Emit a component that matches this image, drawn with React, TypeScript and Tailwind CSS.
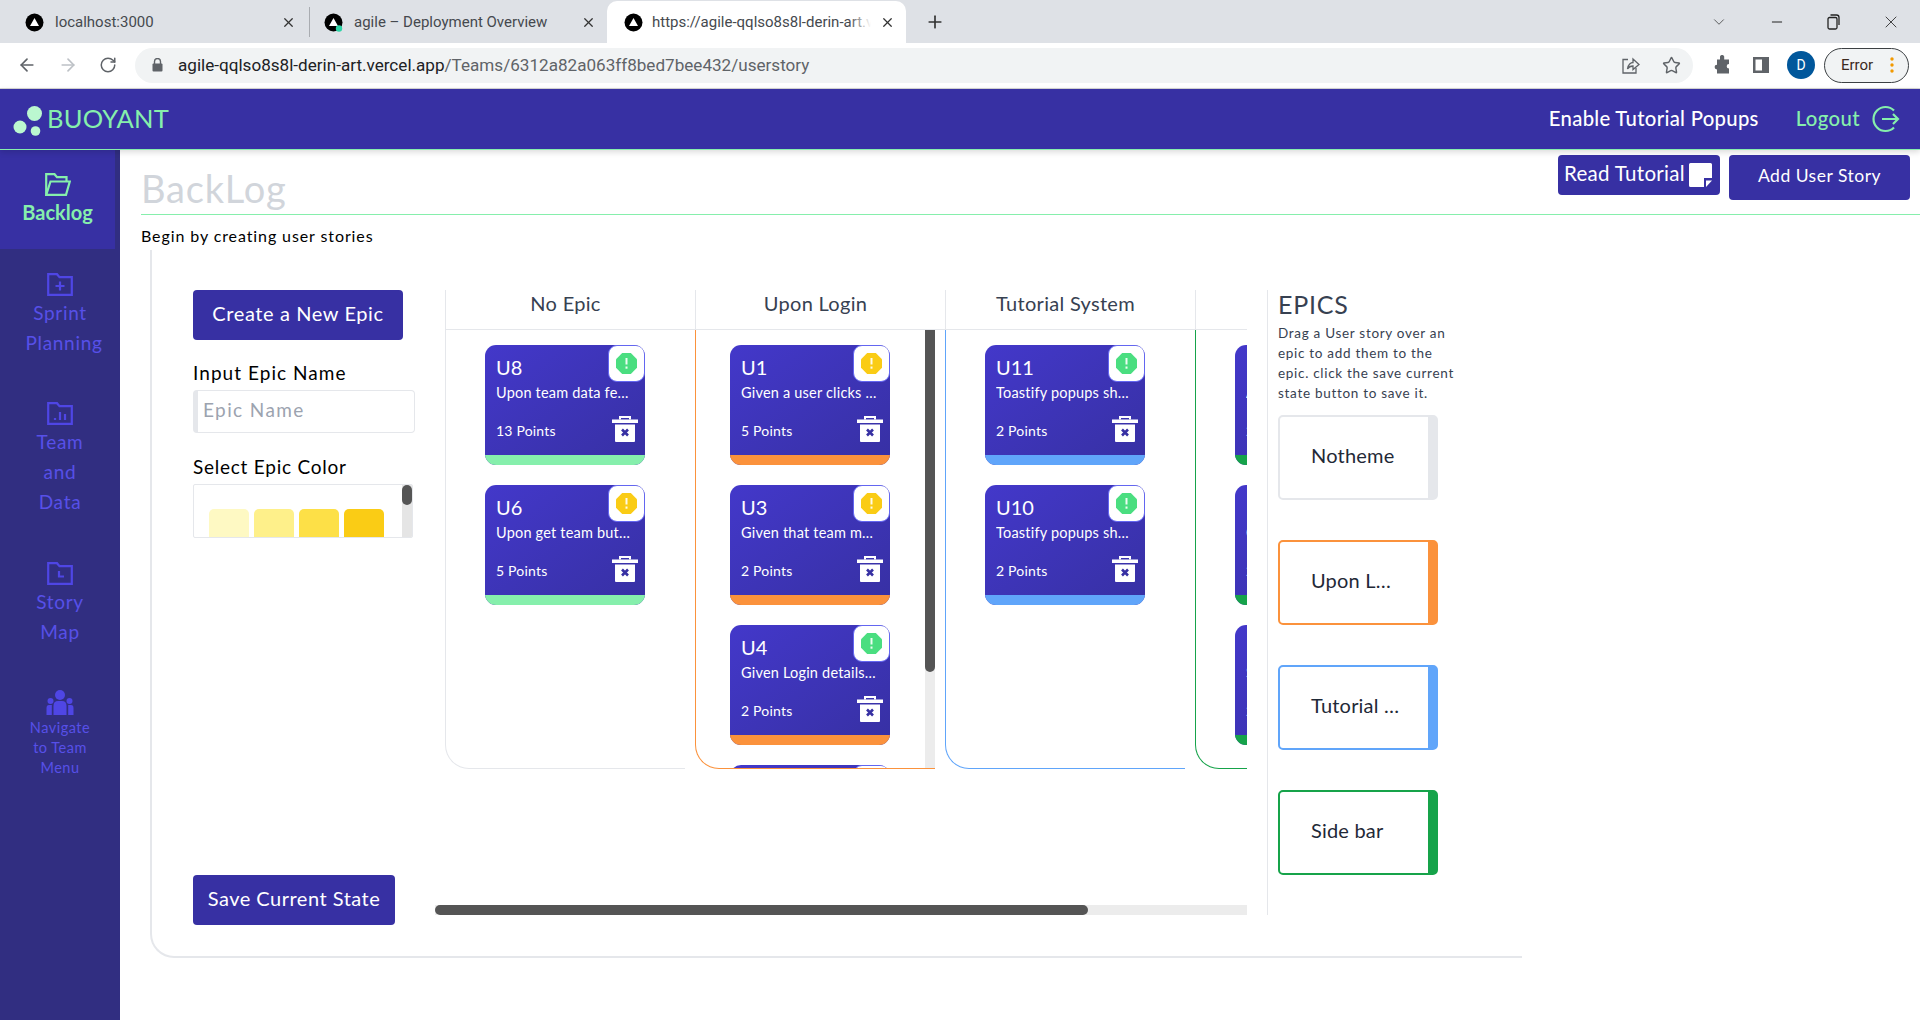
import React from "react";
import { ArrowLeft, ArrowRight, RotateCw, Star, Plus, X, ChevronDown, Minus } from "lucide-react";

function VercelIcon({ dot }: { dot?: boolean }) {
  return (
    <svg width="19" height="19" viewBox="0 0 19 19" className="flex-none">
      <circle cx="9.5" cy="9.5" r="9" fill="#000" />
      <path d="M9.5 5 L14 13 H5 Z" fill="#fff" />
      {dot && <circle cx="15" cy="15.5" r="3.2" fill="#2dd4a7" />}
    </svg>
  );
}

function Tab({ title, dot, active, tw, iconGap }: { title: string; dot?: boolean; active?: boolean; tw: string; iconGap: string }) {
  return (
    <div className={`relative flex items-center h-full flex-none ${tw} ${active ? "bg-white rounded-t-[10px]" : ""}`}>
      <VercelIcon dot={dot} />
      <span className={`relative ${iconGap} text-[15px] text-[#45494e] whitespace-nowrap overflow-hidden flex-1`}>
        {title}
        {active && <span className="absolute top-0 right-0 w-[22px] h-full bg-gradient-to-r from-transparent to-white" />}
      </span>
      <X size={15} strokeWidth={2} className="flex-none text-[#333]" />
    </div>
  );
}

function BrowserChrome() {
  return (
    <div className="flex-none font-[family-name:Roboto,sans-serif]">
      <div className="h-[43px] bg-[#dee1e6] flex items-end">
        <div className="h-[42px] flex items-center w-full">
          <Tab title="localhost:3000" tw="w-[310px] pl-[25px] pr-[13px] border-r border-[#a9acb1] !h-[30px]" iconGap="ml-[11px]" />
          <Tab title="agile – Deployment Overview" dot tw="w-[297px] pl-[14px] pr-[11px]" iconGap="ml-[11px]" />
          <Tab
            title="https://agile-qqlso8s8l-derin-art.vercel.app"
            active
            tw="w-[299px] pl-[17px] pr-[11px]"
            iconGap="ml-[9px] mr-[9px]"
          />
          <Plus size={20} strokeWidth={2} className="ml-[19px] text-[#333]" />
          <div className="flex-1" />
          <ChevronDown size={18} strokeWidth={1} className="text-[#333] mr-[41px]" />
          <Minus size={16} strokeWidth={1.5} className="text-[#222] mr-[41px]" />
          <svg width="14" height="16" viewBox="0 0 14 16" fill="none" stroke="#222" strokeWidth="1.3" className="mr-[41px]">
            <rect x="2" y="3.5" width="9" height="11.5" rx="1.5" />
            <path d="M4.5 1 H10.5 Q13 1 13 3.5 V11" />
          </svg>
          <X size={20} strokeWidth={1} className="text-[#222] mr-[19px]" />
        </div>
      </div>
      <div className="h-[46px] bg-white border-b border-[#d6d6d6] flex items-center pb-[1px]">
        <ArrowLeft size={20} strokeWidth={2} className="ml-[17px] text-[#5f6368]" />
        <ArrowRight size={20} strokeWidth={2} className="ml-[21px] text-[#bdc1c6]" />
        <RotateCw size={18} strokeWidth={2} className="ml-[21px] text-[#5f6368]" />
        <div className="ml-[18px] w-[1558px] h-[35px] rounded-full bg-[#f1f3f4] flex items-center pl-[17px]">
          <svg width="11" height="14" viewBox="0 0 11 14" className="flex-none">
            <rect x="0.5" y="5.5" width="10" height="8" rx="1" fill="#5f6368" />
            <path d="M2.5 6 V3.5 a3 3 0 0 1 6 0 V6" fill="none" stroke="#5f6368" strokeWidth="1.4" />
          </svg>
          <div className="ml-[15px] mt-[2px] text-[17.1px] whitespace-nowrap">
            <span className="text-[#202124]">agile-qqlso8s8l-derin-art.vercel.app</span>
            <span className="text-[#5f6368]">/Teams/6312a82a063ff8bed7bee432/userstory</span>
          </div>
          <div className="flex-1" />
          <svg width="19" height="19" viewBox="0 0 19 19" fill="none" stroke="#5f6368" strokeWidth="1.3" className="mr-[22px]">
            <path d="M7 3.5 H2 V17 H15 V12" />
            <path d="M6.5 13 C7 8.5 10 6.5 12 6.5 V3 L18 8.5 L12 13.5 V10 C10 10 8 10.5 6.5 13 Z" />
          </svg>
          <Star size={19} strokeWidth={1.8} className="text-[#5f6368] mr-[12px]" />
        </div>
        <svg width="20" height="20" viewBox="0 0 20 20" fill="#5f6368" className="ml-[19px] flex-none">
          <path d="M8 1.5 a2.2 2.2 0 0 1 4.2 0 V4.5 H17 V9 a2.3 2.3 0 0 0 0 4.6 V18.5 H5 V14.5 a2.4 2.4 0 0 1 0 -4.8 V4.5 H8 Z" />
        </svg>
        <svg width="18" height="18" viewBox="0 0 18 18" className="ml-[20px] flex-none">
          <rect x="1" y="1" width="16" height="16" fill="#5f6368" />
          <rect x="3.5" y="3.5" width="6.5" height="11" fill="#fff" />
        </svg>
        <div className="ml-[17px] w-[28px] h-[28px] rounded-full bg-[#01579b] text-white text-[14px] flex items-center justify-center flex-none">D</div>
        <div className="ml-[9px] w-[85px] h-[35px] rounded-full border border-[#3c4043] bg-[#f1f3f4] flex items-center pl-[16px] flex-none">
          <span className="text-[15px] text-[#3c2a1e]">Error</span>
          <svg width="4" height="16" viewBox="0 0 4 16" fill="#f29900" className="ml-[17px]">
            <circle cx="2" cy="2" r="1.7" />
            <circle cx="2" cy="8" r="1.7" />
            <circle cx="2" cy="14" r="1.7" />
          </svg>
        </div>
      </div>
    </div>
  );
}

function Navbar() {
  return (
    <div className="flex-none h-[61px] bg-[#3730a3] border-b border-[#86efac] flex items-center shadow-[0_2px_6px_rgba(0,0,0,0.15)] relative z-10">
      <svg width="32" height="32" viewBox="0 0 32 32" className="ml-[12px] flex-none mt-[3px]">
        <circle cx="22.5" cy="8.5" r="7.5" fill="#bbf7d0" />
        <circle cx="8" cy="22" r="6.5" fill="#bbf7d0" />
        <circle cx="23.5" cy="26" r="4.8" fill="#bbf7d0" />
      </svg>
      <span className="ml-[3px] pb-[2px] text-[25.5px] text-[#86efac] tracking-[0.2px]">BUOYANT</span>
      <div className="flex-1" />
      <span className="pb-[2px] text-[20.3px] font-medium text-white tracking-[0.3px]">Enable Tutorial Popups</span>
      <span className="ml-[37px] pb-[2px] text-[20.3px] font-medium text-[#86efac] tracking-[0.4px]">Logout</span>
      <svg width="28" height="28" viewBox="0 0 28 28" fill="none" stroke="#86efac" strokeWidth="2.2" className="ml-[12px] mr-[20px]">
        <path d="M22 5.5 A12 12 0 1 0 22 22.5" />
        <path d="M10 14 H26 M21 9 L26 14 L21 19" />
      </svg>
    </div>
  );
}

function FolderBase({ color, children }: { color: string; children?: React.ReactNode }) {
  return (
    <svg width="26" height="23" viewBox="0 0 26 23" fill="none" stroke={color} strokeWidth="2.2">
      <path d="M1.2 21.8 V1.2 H10 L12.5 4.2 H24.8 V21.8 Z" />
      {children}
    </svg>
  );
}

function SideItem({ icon, lines }: { icon: React.ReactNode; lines: React.ReactNode[] }) {
  return (
    <div className="flex flex-col items-center w-[120px] text-[19px] leading-[30px] text-[#5750e8] tracking-[0.7px]">
      {icon}
      <div className="mt-[2px] text-center">
        {lines.map((l, i) => (
          <div key={i}>{l}</div>
        ))}
      </div>
    </div>
  );
}

function Sidebar() {
  const c = "#4f46e5";
  return (
    <div className="flex-none w-[120px] bg-[#312e81] flex flex-col items-start">
      <div className="w-[115px] h-[99px] bg-[#3730a3] flex flex-col items-center pt-[23px]">
        <svg width="26" height="23" viewBox="0 0 26 23" fill="none" stroke="#86efac" strokeWidth="2.2">
          <path d="M1.2 21.8 V1.2 H9.5 L12 4.2 H21.5 V8.5" />
          <path d="M1.2 21.8 L5.5 8.5 H24.8 L21 21.8 Z" />
        </svg>
        <div className="mt-[4px] text-[20px] leading-[24px] font-bold text-[#86efac]">Backlog</div>
      </div>
      <div className="mt-[24px]">
        <SideItem
          icon={
            <FolderBase color={c}>
              <path d="M13 8.5 V17.5 M8.5 13 H17.5" />
            </FolderBase>
          }
          lines={["Sprint", <span className="pl-[8px]">Planning</span>]}
        />
      </div>
      <div className="mt-[44px]">
        <SideItem
          icon={
            <FolderBase color={c}>
              <path d="M8 16 V18 M13 10 V18 M18 12 V18" />
            </FolderBase>
          }
          lines={["Team", "and", "Data"]}
        />
      </div>
      <div className="mt-[45px]">
        <SideItem
          icon={
            <FolderBase color={c}>
              <path d="M12 9 V14.5 H17" />
            </FolderBase>
          }
          lines={["Story", "Map"]}
        />
      </div>
      <div className="mt-[43px] w-[120px] flex flex-col items-center text-[14.5px] leading-[20px] text-[#5750e8] tracking-[0.5px] text-center">
        <svg width="28" height="26" viewBox="0 0 28 26" fill="#4f46e5">
          <circle cx="14" cy="5" r="5" />
          <circle cx="4.5" cy="11" r="3" />
          <circle cx="23.5" cy="11" r="3" />
          <path d="M7.5 25 V16 Q7.5 11 12 11 H16 Q20.5 11 20.5 16 V25 Z" />
          <path d="M0.5 25 V18 Q0.5 15 3 15 H5.8 V25 Z" />
          <path d="M27.5 25 V18 Q27.5 15 25 15 H22.2 V25 Z" />
        </svg>
        <div className="mt-[2px]">Navigate</div>
        <div>to Team</div>
        <div>Menu</div>
      </div>
    </div>
  );
}

function Octagon({ color }: { color: string }) {
  return (
    <svg width="21" height="21" viewBox="0 0 21 21">
      <polygon points="6.2,0 14.8,0 21,6.2 21,14.8 14.8,21 6.2,21 0,14.8 0,6.2" fill={color} />
      <rect x="9.5" y="5" width="2" height="6.5" fill="#fff" opacity="0.9" />
      <rect x="9.5" y="13.5" width="2" height="2.2" fill="#fff" opacity="0.9" />
    </svg>
  );
}

function TrashIcon() {
  return (
    <svg width="26" height="26" viewBox="0 0 26 26">
      <path d="M8 3.5 V1 H18 V3.5" fill="none" stroke="#fff" strokeWidth="2" />
      <rect x="0" y="3.5" width="26" height="3.5" fill="#fff" />
      <path d="M3 8.5 H23 V25 a1 1 0 0 1 -1 1 H4 a1 1 0 0 1 -1 -1 Z" fill="#fff" />
      <path d="M10 13.5 L16 19.5 M16 13.5 L10 19.5" stroke="#3730a3" strokeWidth="2.6" />
    </svg>
  );
}

type CardData = { id: string; text: string; pts: number; pri: string };

function Card({ card, bar }: { card: CardData; bar: string }) {
  return (
    <div className="relative flex-none w-[160px] h-[120px] rounded-[11px] overflow-hidden bg-gradient-to-br from-[#4338ca] to-[#3730a3] flex flex-col">
      <div className="absolute top-0 right-0 w-[37px] h-[37px] bg-white border border-[#6366f1] rounded-[9px] flex items-center justify-center">
        <Octagon color={card.pri} />
      </div>
      <div className="flex-1 pl-[11px] text-white">
        <div className="mt-[10px] text-[20px] leading-[24px]">{card.id}</div>
        <div className="mt-[4px] w-[140px] text-[14.5px] leading-[20px] whitespace-nowrap overflow-hidden tracking-[0.2px]">{card.text}</div>
        <div className="mt-[10px] flex items-center justify-between pr-[7px]">
          <span className="mt-[5px] text-[14px] leading-[26px] tracking-[0.2px]">{card.pts} Points</span>
          <TrashIcon />
        </div>
      </div>
      <div className={`flex-none h-[10px] ${bar}`} />
    </div>
  );
}

const G = "#4ade80";
const Y = "#facc15";

const cols: { title: string; border: string; bar: string; scroll?: boolean; cards: CardData[] }[] = [
  {
    title: "No Epic",
    border: "border-[#e5e7eb]",
    bar: "bg-[#86efac]",
    cards: [
      { id: "U8", text: "Upon team data fe…", pts: 13, pri: G },
      { id: "U6", text: "Upon get team but…", pts: 5, pri: Y },
    ],
  },
  {
    title: "Upon Login",
    border: "border-[#fb923c]",
    bar: "bg-[#fb923c]",
    scroll: true,
    cards: [
      { id: "U1", text: "Given a user clicks …", pts: 5, pri: Y },
      { id: "U3", text: "Given that team m…", pts: 2, pri: Y },
      { id: "U4", text: "Given Login details…", pts: 2, pri: G },
      { id: "U5", text: "Given a team…", pts: 2, pri: G },
    ],
  },
  {
    title: "Tutorial System",
    border: "border-[#60a5fa]",
    bar: "bg-[#60a5fa]",
    cards: [
      { id: "U11", text: "Toastify popups sh…", pts: 2, pri: G },
      { id: "U10", text: "Toastify popups sh…", pts: 2, pri: G },
    ],
  },
  {
    title: "Side bar",
    border: "border-[#16a34a]",
    bar: "bg-[#16a34a]",
    cards: [
      { id: "U7", text: "A side bar…", pts: 2, pri: G },
      { id: "U9", text: "Given a side…", pts: 2, pri: G },
      { id: "U2", text: "Side bar sho…", pts: 2, pri: G },
    ],
  },
];

function Board() {
  return (
    <div className="flex-none w-[812px] h-[625px] flex flex-col">
      <div className="h-[479px] pl-[10px] flex overflow-hidden">
        {cols.map((col, i) => (
          <div key={col.title} className="flex-none w-[250px] flex flex-col">
            <div className="flex-none h-[40px] border-l border-b border-[#e5e7eb] text-[20px] text-[#374151] tracking-[0.3px] pr-[10px] pb-[14px] flex items-center justify-center">
              {i < 3 ? col.title : ""}
            </div>
            <div className={`flex-1 min-h-0 w-[240px] border-l border-b ${col.border} rounded-bl-[24px] flex overflow-hidden`}>
              <div className="flex-1 min-w-0 pt-[15px] pr-[1px] flex flex-col items-center gap-[20px]">
                {col.cards.map((c) => (
                  <Card key={c.id} card={c} bar={col.bar} />
                ))}
              </div>
              {col.scroll && (
                <div className="flex-none w-[10px] bg-[#ececec]">
                  <div className="h-[342px] bg-[#555] rounded-b-[5px]" />
                </div>
              )}
            </div>
          </div>
        ))}
      </div>
      <div className="mt-auto h-[10px] bg-[#ececec]">
        <div className="w-[653px] h-full bg-[#555] rounded-full" />
      </div>
    </div>
  );
}

function Form() {
  const swatches = ["bg-[#fef9c3]", "bg-[#fef08a]", "bg-[#fde047]", "bg-[#facc15]"];
  return (
    <div className="flex-none w-[283px] h-[635px] pl-[41px] flex flex-col items-start">
      <button className="w-[210px] h-[50px] pb-[4px] bg-[#3730a3] rounded-[4px] text-white text-[20px] tracking-[0.6px]">Create a New Epic</button>
      <div className="mt-[21px] text-[19px] leading-[24px] text-black tracking-[1.05px]">Input Epic Name</div>
      <div className="mt-[5px] w-[222px] h-[43px] pb-[2px] rounded-[4px] border border-[#e5e7eb] border-l-[5px] flex items-center pl-[5px] text-[19px] text-[#9ca3af] tracking-[1.4px]">Epic Name</div>
      <div className="mt-[22px] text-[19px] leading-[24px] text-black tracking-[0.75px]">Select Epic Color</div>
      <div className="mt-[5px] w-[220px] h-[54px] border border-[#e5e7eb] rounded-[2px] overflow-hidden flex">
        <div className="flex-1 pl-[15px] pt-[24px] flex gap-[5px]">
          {swatches.map((s) => (
            <div key={s} className={`w-[40px] h-[40px] rounded-[5px] flex-none ${s}`} />
          ))}
        </div>
        <div className="w-[10px] bg-[#e5e5e5] flex-none">
          <div className="h-[20px] rounded-[5px] bg-[#555]" />
        </div>
      </div>
      <button className="mt-auto w-[202px] h-[50px] pb-[4px] bg-[#3730a3] rounded-[4px] text-white text-[20px] tracking-[0.5px]">Save Current State</button>
    </div>
  );
}

function EpicBox({ name, border }: { name: string; border: string }) {
  return (
    <div className={`w-[160px] h-[85px] rounded-[5px] border-2 border-r-[10px] ${border} flex items-center pl-[31px] pb-[5px] text-[20px] text-[#1f2937] tracking-[0.2px]`}>
      {name}
    </div>
  );
}

function Epics() {
  return (
    <div className="flex-none ml-[20px] w-[190px] h-[625px] border-l border-[#e5e7eb] pl-[10px]">
      <div className="-mt-[1px] text-[25px] leading-[30px] text-[#374151] tracking-[0.8px]">EPICS</div>
      <div className="mt-[4px] w-[178px] text-[13.5px] leading-[20px] text-[#374151] tracking-[0.7px] whitespace-nowrap">
        <div>Drag a User story over an</div>
        <div>epic to add them to the</div>
        <div>epic. click the save current</div>
        <div>state button to save it.</div>
      </div>
      <div className="mt-[12px] flex flex-col gap-[40px]">
        <EpicBox name="Notheme" border="border-[#e5e7eb]" />
        <EpicBox name="Upon L…" border="border-[#fb923c]" />
        <EpicBox name="Tutorial …" border="border-[#60a5fa]" />
        <EpicBox name="Side bar" border="border-[#16a34a]" />
      </div>
    </div>
  );
}

function Main() {
  return (
    <div className="flex-1 min-w-0 flex flex-col">
      <div className="flex-none h-[65px] ml-[21px] border-b border-[#86efac] flex items-start justify-between">
        <div className="mt-[15px] text-[38px] leading-[46px] text-[#d1d5db] tracking-[0.8px]">BackLog</div>
        <div className="mt-[5px] mr-[10px] flex items-start gap-[9px]">
          <button className="w-[162px] h-[40px] bg-[#3730a3] rounded-[4px] flex items-center pl-[6px] text-white text-[20.5px] tracking-[0.3px] whitespace-nowrap">
            <span className="pb-[4px]">Read Tutorial</span>
            <svg width="23" height="24" viewBox="0 0 23 24" className="ml-[4px] flex-none">
              <path d="M1.5 0 H21.5 a1.5 1.5 0 0 1 1.5 1.5 V15 H15 V24 H1.5 A1.5 1.5 0 0 1 0 22.5 V1.5 A1.5 1.5 0 0 1 1.5 0 Z" fill="#fff" />
              <path d="M17 17.5 H23 L17 24 Z" fill="#fff" />
            </svg>
          </button>
          <button className="w-[181px] h-[45px] pb-[2px] bg-[#3730a3] rounded-[4px] text-white text-[17.5px] tracking-[0.5px]">Add User Story</button>
        </div>
      </div>
      <div className="flex-none h-[35px] ml-[21px] pt-[9px] text-[16px] leading-[24px] text-black tracking-[0.9px]">Begin by creating user stories</div>
      <div className="flex-none ml-[30px] w-[1372px] h-[708px] border-l-2 border-b-2 border-[#e5e7eb] rounded-bl-[24px] pt-[40px] flex items-start">
        <Form />
        <Board />
        <Epics />
      </div>
    </div>
  );
}

export default function App() {
  return (
    <div className="w-[1920px] h-[1020px] overflow-hidden bg-white flex flex-col font-[family-name:Lato,sans-serif]">
      <BrowserChrome />
      <Navbar />
      <div className="flex-1 min-h-0 flex">
        <Sidebar />
        <Main />
      </div>
    </div>
  );
}
